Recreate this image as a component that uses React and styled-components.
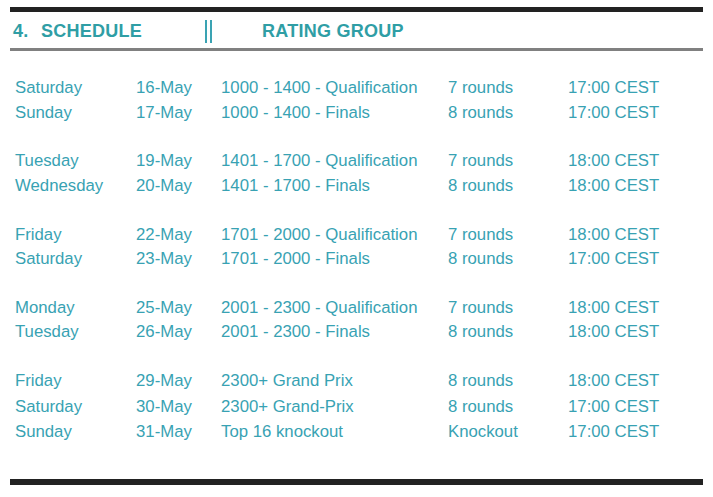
import React from "react";
import styled, { createGlobalStyle } from "styled-components";

const Global = createGlobalStyle`
  html, body { margin: 0; padding: 0; background: #ffffff; }
  body { font-family: "Liberation Sans", Arial, sans-serif; }
`;

const Page = styled.div`
  width: 693px;
  margin-left: 10px;
  padding-top: 7px;
`;

const TopBar = styled.div`
  height: 5px;
  background: #222222;
`;

const Header = styled.div`
  display: flex;
  align-items: center;
  height: 34px;
  padding-top: 2px;
  padding-left: 3px;
  border-bottom: 3px solid #808080;
  font-size: 18px;
  font-weight: bold;
  letter-spacing: 0.25px;
  color: #2f9ea5;
  line-height: 34px;
`;

const Num = styled.span`
  width: 28px;
`;

const Title = styled.span`
  width: 164px;
`;

const DoubleBar = styled.span`
  display: inline-block;
  box-sizing: border-box;
  width: 7px;
  height: 23px;
  margin-top: 1px;
  border-left: 2px solid #3aa3b3;
  border-right: 2px solid #3aa3b3;
  margin-right: 50px;
`;

const Table = styled.div`
  display: flex;
  flex-direction: column;
  gap: 24.25px;
  padding-top: 25px;
  padding-left: 5px;
  padding-bottom: 33px;
`;

const Group = styled.div`
  display: flex;
  flex-direction: column;
`;

const Row = styled.div`
  display: grid;
  grid-template-columns: 121px 85px 227px 120px 1fr;
  height: ${(p) => p.$pitch}px;
  line-height: 24.5px;
  font-size: 16.75px;
  color: #38a2b3;
  white-space: nowrap;
`;

const BottomBar = styled.div`
  height: 6px;
  background: #222222;
`;

const groups = [
  [
    ["Saturday", "16-May", "1000 - 1400 - Qualification", "7 rounds", "17:00 CEST"],
    ["Sunday", "17-May", "1000 - 1400 - Finals", "8 rounds", "17:00 CEST"],
  ],
  [
    ["Tuesday", "19-May", "1401 - 1700 - Qualification", "7 rounds", "18:00 CEST"],
    ["Wednesday", "20-May", "1401 - 1700 - Finals", "8 rounds", "18:00 CEST"],
  ],
  [
    ["Friday", "22-May", "1701 - 2000 - Qualification", "7 rounds", "18:00 CEST"],
    ["Saturday", "23-May", "1701 - 2000 - Finals", "8 rounds", "17:00 CEST"],
  ],
  [
    ["Monday", "25-May", "2001 - 2300 - Qualification", "7 rounds", "18:00 CEST"],
    ["Tuesday", "26-May", "2001 - 2300 - Finals", "8 rounds", "18:00 CEST"],
  ],
  [
    ["Friday", "29-May", "2300+ Grand Prix", "8 rounds", "18:00 CEST"],
    ["Saturday", "30-May", "2300+ Grand-Prix", "8 rounds", "17:00 CEST"],
    ["Sunday", "31-May", "Top 16 knockout", "Knockout", "17:00 CEST"],
  ],
];

export default function App() {
  return (
    <>
      <Global />
      <Page>
        <TopBar />
        <Header>
          <Num>4.</Num>
          <Title>SCHEDULE</Title>
          <DoubleBar />
          <span>RATING GROUP</span>
        </Header>
        <Table>
          {groups.map((g, gi) => (
            <Group key={gi}>
              {g.map((r, ri) => (
                <Row key={ri} $pitch={gi === groups.length - 1 ? 25.5 : 24.5}>
                  {r.map((c, ci) => (
                    <span key={ci}>{c}</span>
                  ))}
                </Row>
              ))}
            </Group>
          ))}
        </Table>
        <BottomBar />
      </Page>
    </>
  );
}
